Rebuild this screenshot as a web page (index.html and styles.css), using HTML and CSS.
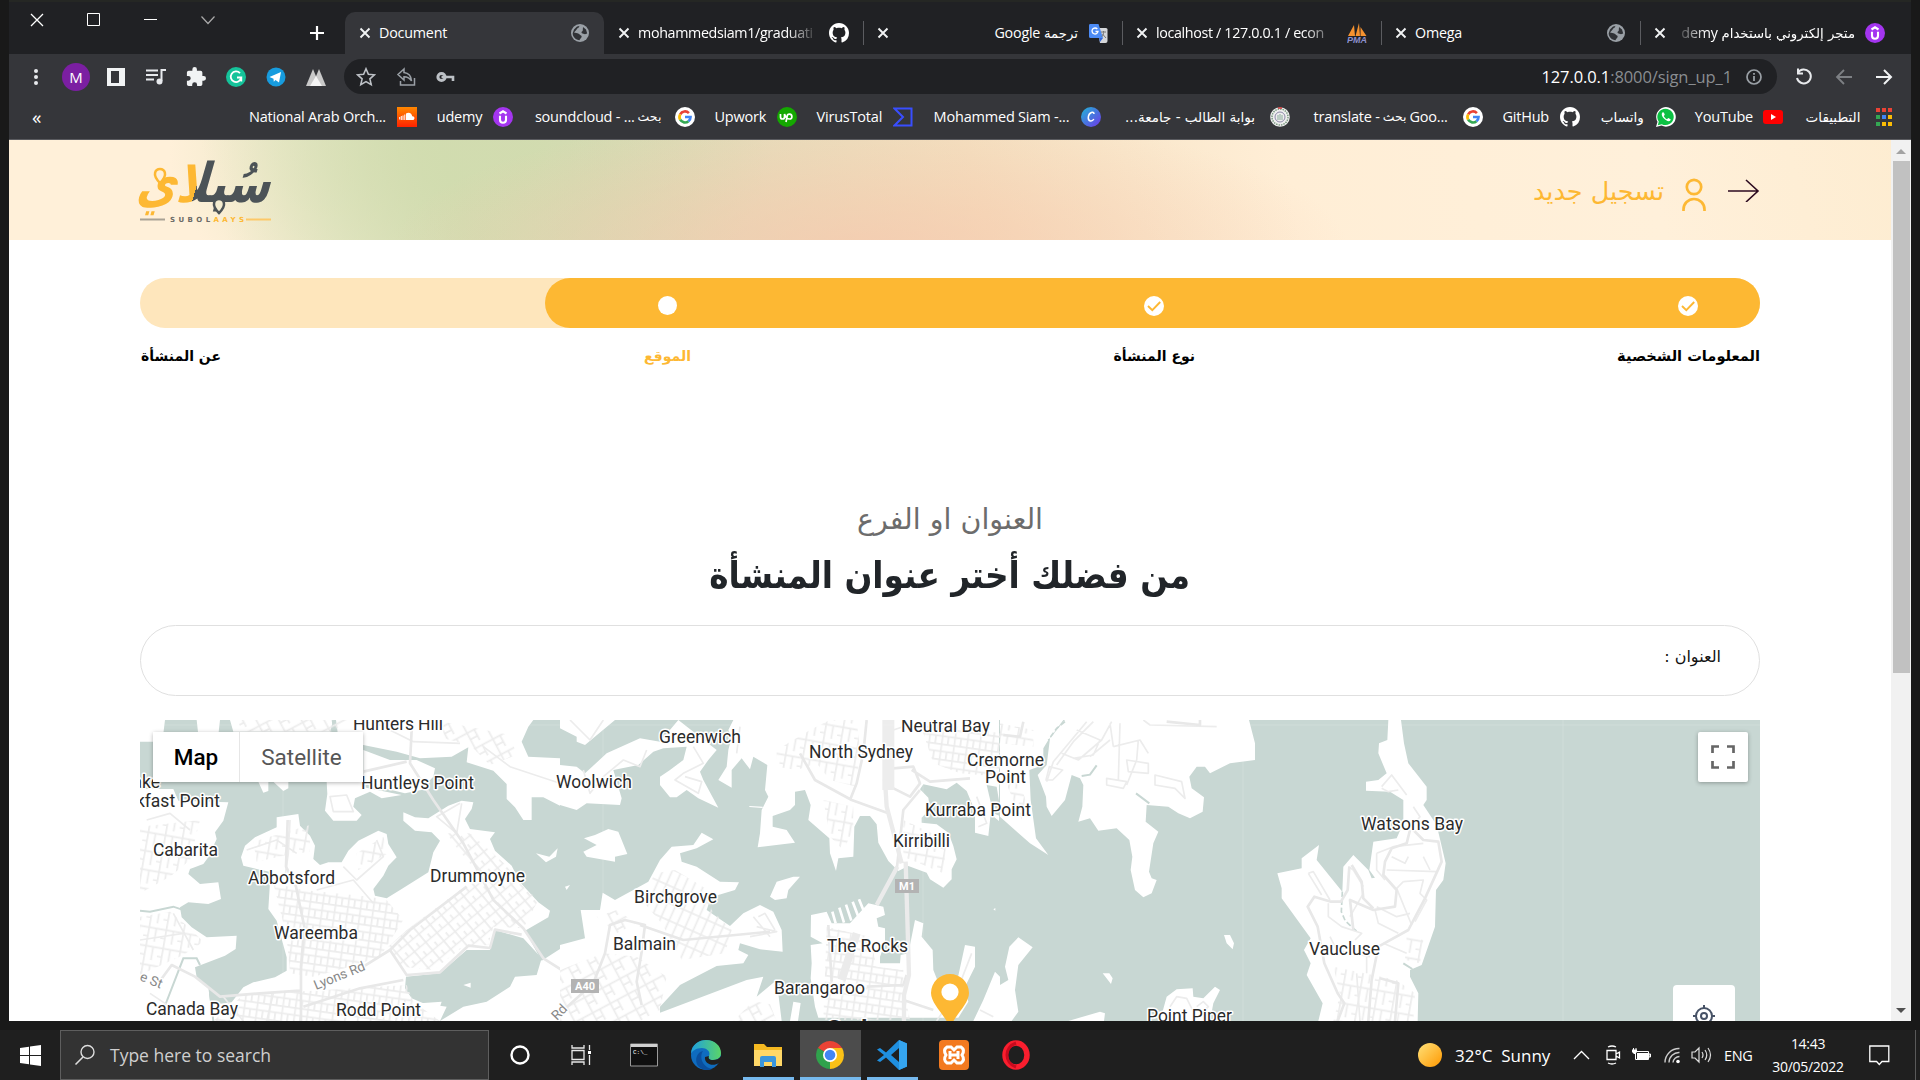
FILE: index.html
```html
<!DOCTYPE html>
<html lang="ar">
<head>
<meta charset="utf-8">
<title>Document</title>
<link rel="stylesheet" href="styles.css">
</head>
<body>
<svg class="defs" width="0" height="0">
  <symbol id="close" viewBox="0 0 12 12"><path d="M1.5 1.5l9 9M10.500 1.500l-9 9" stroke="#f1f3f4" stroke-width="1.9"/></symbol>
  <symbol id="globe" viewBox="0 0 18 18"><circle cx="9" cy="9" r="9" fill="#9aa0a6"/><path d="M9.500 1.800c-2 .2-1 1.800-2.500 2.300-1.500.4-1 1.900-2.200 2.400L3 8.500l3.500.8c2 .2 2 2 3.500 2.200 1.300.3.600 2.500-.9 3.500l-.6 1.200C5 16 1.700 13 1.700 9.200L3 5.500 6 2.500zM12 3l3 2.500 1.200 4-2.200.7-2.500-.7c-1.500-.4-1.200-2.300.2-2.600z" fill="#303236"/></symbol>
  <symbol id="github" viewBox="0 0 16 16"><path fill="#fff" d="M8 0C3.580 0 0 3.580 0 8c0 3.540 2.290 6.530 5.470 7.590.4.070.55-.17.55-.38 0-.19-.01-.82-.01-1.490-2.010.37-2.530-.49-2.690-.94-.09-.23-.48-.94-.82-1.130-.28-.15-.68-.52-.01-.53.63-.01 1.080.58 1.230.82.72 1.210 1.870.87 2.330.66.070-.52.28-.87.51-1.070-1.780-.2-3.640-.89-3.640-3.950 0-.87.31-1.590.82-2.150-.08-.2-.36-1.020.08-2.120 0 0 .67-.21 2.200.82.64-.18 1.320-.27 2-.27s1.360.09 2 .27c1.530-1.040 2.200-.82 2.200-.82.44 1.100.16 1.920.08 2.120.51.56.82 1.270.82 2.150 0 3.070-1.870 3.750-3.650 3.950.29.25.54.73.54 1.480 0 1.070-.01 1.930-.01 2.200 0 .21.15.46.55.38A8 8 0 0 0 16 8c0-4.420-3.580-8-8-8z"/></symbol>
  <symbol id="udemy" viewBox="0 0 20 20"><circle cx="10" cy="10" r="10" fill="#a435f0"/><path d="M6.500 6.500L10 4.300l3.500 2.200M7 8.800v4a3 3 0 0 0 6 0v-4" fill="none" stroke="#fff" stroke-width="2.100"/></symbol>
  <symbol id="google" viewBox="0 0 20 20"><circle cx="10" cy="10" r="10" fill="#fff"/><g fill="none" stroke-width="2.700"><path d="M13.900 6.100A5.500 5.500 0 0 0 5.200 7.300" stroke="#ea4335"/><path d="M5.200 7.300a5.500 5.500 0 0 0 0 5.400" stroke="#fbbc05"/><path d="M5.200 12.700a5.500 5.500 0 0 0 8.300 1.500" stroke="#34a853"/><path d="M13.500 14.200A5.500 5.500 0 0 0 15.500 10H10" stroke="#4285f4"/></g></symbol>
  <symbol id="check" viewBox="0 0 20 20"><circle cx="10" cy="10" r="10" fill="#fff"/><path d="M4 10l4.300 4.200L16.200 6" fill="none" stroke="#fdb833" stroke-width="1.900"/></symbol>
</svg>

<div class="desktop">
<div class="window">
  <div class="tabstrip">
    <div class="caption">
      <svg width="14" height="14"><path d="M1 1l12 12M13 1L1 13" stroke="#fff" stroke-width="1.300"/></svg>
      <svg width="14" height="14"><path d="M.5 .5h12v12h-12z" fill="none" stroke="#fff"/></svg>
      <svg width="14" height="14"><path d="M0 6.500h13" stroke="#fff"/></svg>
      <svg width="14" height="14"><path d="M.5 3.500l6.500 7 6.500-7" fill="none" stroke="#aaa" stroke-width="1.200"/></svg>
    </div>
    <svg class="newtab" width="16" height="16"><path d="M8 1v14M1 8h14" stroke="#fff" stroke-width="2.200"/></svg>
    <div class="tab active"><svg class="x"><use href="#close"/></svg><span class="ttl">Document</span><svg class="fav g"><use href="#globe"/></svg></div>
    <div class="tab nosep"><svg class="x"><use href="#close"/></svg><span class="ttl fade">mohammedsiam1/graduati</span><svg class="fav"><use href="#github"/></svg></div>
    <div class="tab"><svg class="x"><use href="#close"/></svg><span class="ttl end" dir="rtl"><i class="ar">ترجمة</i> Google</span>
      <svg class="fav" viewBox="0 0 20 20"><path d="M9 5h9a1.500 1.500 0 0 1 1.500 1.500V18a2 2 0 0 1-2 2H12z" fill="#d5d7da"/><path d="M2 1h8.500L15 15H2.500A1.500 1.500 0 0 1 1 13.500v-11A1.500 1.500 0 0 1 2 1z" fill="#4c8bf5"/><path d="M11 15h4l-3 4z" fill="#3367d6"/><path d="M9.300 6A3 3 0 1 0 10 8.500H7.500" fill="none" stroke="#fff" stroke-width="1.300"/><path d="M13 9h5M15.500 8v1.500c0 2-1 3.500-2 4.500M14.500 11l3.500 4" stroke="#777" fill="none"/></svg></div>
    <div class="tab"><svg class="x"><use href="#close"/></svg><span class="ttl fade">localhost / 127.0.0.1 / econ</span>
      <svg class="fav" viewBox="0 0 20 20"><path d="M1 13L7 2l1 11zM8.500 13L12 0l1 13zM13.500 13V4l6 9z" fill="#f5922f"/><text x="0" y="20" font-size="8.500" font-weight="700" font-style="italic" fill="#8c90cc" textLength="20" lengthAdjust="spacingAndGlyphs" font-family="Liberation Sans">PMA</text></svg></div>
    <div class="tab"><svg class="x"><use href="#close"/></svg><span class="ttl">Omega</span><svg class="fav g"><use href="#globe"/></svg></div>
    <div class="tab"><svg class="x"><use href="#close"/></svg><span class="ttl end fadel" dir="rtl"><i class="ar">متجر إلكتروني باستخدام</i> <bdi>demy</bdi></span><svg class="fav"><use href="#udemy"/></svg></div>
  </div>

  <div class="toolbar">
    <div class="cell"><svg width="6" height="20"><g fill="#e8eaed"><circle cx="3" cy="4" r="2"/><circle cx="3" cy="10" r="2"/><circle cx="3" cy="16" r="2"/></g></svg></div>
    <div class="cell"><span class="avatar">M</span></div>
    <div class="cell"><svg width="20" height="20"><path d="M1 1h18v18H1zM5 4v12h8V4z" fill="#f1f3f4" fill-rule="evenodd"/></svg></div>
    <div class="cell"><svg width="20" height="20"><path d="M0 3.500h12M0 8h12M0 12.500h8M15.500 14V3H20" fill="none" stroke="#e8eaed" stroke-width="2"/><circle cx="13.500" cy="14.500" r="3" fill="#e8eaed"/></svg></div>
    <div class="cell"><svg width="20" height="20" viewBox="1 1 22 22"><path fill="#f1f3f4" d="M20.500 11H19V7a2 2 0 0 0-2-2h-4V3.500a2.500 2.500 0 0 0-5 0V5H4a2 2 0 0 0-2 2v3.800h1.500a2.700 2.700 0 0 1 0 5.400H2V20a2 2 0 0 0 2 2h3.800v-1.500a2.700 2.700 0 0 1 5.400 0V22H17a2 2 0 0 0 2-2v-4h1.500a2.500 2.500 0 0 0 0-5z"/></svg></div>
    <div class="cell"><svg width="20" height="20"><circle cx="10" cy="10" r="10" fill="#15c39a"/><path d="M14 6.200A5.300 5.300 0 1 0 15.300 10.500H11M15.300 10.500v4" fill="none" stroke="#fff" stroke-width="1.800"/></svg></div>
    <div class="cell"><svg width="20" height="20"><circle cx="10" cy="10" r="9.500" fill="#179cde"/><path d="M3.500 10L15 5l-2 10.500-3.500-2.500-1.700 1.800-.3-3z" fill="#fff"/></svg></div>
    <div class="cell"><svg width="22" height="18"><path d="M1 18L8 1l7 17z" fill="#c9c9c9"/><path d="M7 18l7-17 7 17z" fill="#c9c9c9"/><path d="M5 18l6-10 6 10z" fill="#f4f4f4"/></svg></div>
    <div class="omnibox">
      <div class="cell"><svg width="20" height="20"><path d="M10 1.800l2.400 5.500 6 .5-4.500 4 1.300 5.900L10 14.600l-5.200 3.100 1.300-5.900-4.500-4 6-.5z" fill="none" stroke="#bdc1c6" stroke-width="1.600"/></svg></div>
      <div class="cell"><svg width="20" height="20"><path d="M8 2L2 7.500 8 13V9.800c4 0 6 1.500 7.500 4.200-.3-5-3-8-7.500-8.500zM18.500 11v7h-14v-4" fill="none" stroke="#9aa0a6" stroke-width="1.500"/></svg></div>
      <div class="cell"><svg width="20" height="12"><path d="M5.500 6H17v4" stroke="#bdc1c6" stroke-width="2.600" fill="none"/><circle cx="5.500" cy="6" r="3.600" fill="none" stroke="#bdc1c6" stroke-width="3"/></svg></div>
      <span class="url"><b>127.0.0.1</b>:8000/sign_up_1</span>
      <svg class="info" width="16" height="16"><circle cx="8" cy="8" r="7" fill="none" stroke="#9aa0a6" stroke-width="1.700"/><path d="M8 7v5M8 4v1.800" stroke="#9aa0a6" stroke-width="1.800"/></svg>
    </div>
    <div class="cell"><svg width="18" height="18"><path d="M3 4.500A7 7 0 1 1 2 10M3 .5V5.500h5" fill="none" stroke="#e8eaed" stroke-width="2"/></svg></div>
    <div class="cell"><svg width="18" height="18"><path d="M17 9H2M9 2L2 9l7 7" fill="none" stroke="#7d8084" stroke-width="1.800"/></svg></div>
    <div class="cell"><svg width="18" height="18"><path d="M1 9h15M9 2l7 7-7 7" fill="none" stroke="#f1f3f4" stroke-width="2"/></svg></div>
  </div>

  <div class="bookmarks">
    <span class="more">«</span>
    <div class="bm"><span class="w138">National Arab Orch...</span><svg viewBox="0 0 20 20"><defs><linearGradient id="sc" x2="0" y2="1"><stop stop-color="#f80"/><stop offset="1" stop-color="#f20"/></linearGradient></defs><path d="M0 0h20v20H0z" fill="url(#sc)"/><path d="M9 6.500c3-2 6 0 6.200 2.700 3-.2 3 3.800.3 3.800H9zM7.300 7.500h1V13h-1zM5.500 8.500h1V13h-1zM3.800 9h1v4h-1zM2.200 10h1v2.500h-1z" fill="#fff"/></svg></div>
    <div class="bm"><span class="w46">udemy</span><svg><use href="#udemy"/></svg></div>
    <div class="bm"><span class="w131">soundcloud - ...<i class="ar">بحث</i></span><svg><use href="#google"/></svg></div>
    <div class="bm"><span class="w53">Upwork</span><svg viewBox="0 0 20 20"><circle cx="10" cy="10" r="10" fill="#14a800"/><path d="M3.500 7v3a2 2 0 0 0 4 0V7c1 3 3 5 5 5a2.400 2.400 0 1 0-2.400-2.600L9 15" fill="none" stroke="#fff" stroke-width="1.700"/></svg></div>
    <div class="bm"><span class="w66">VirusTotal</span><svg viewBox="0 0 20 20"><path d="M1.500 1.500h17v17h-17L10 10z" fill="none" stroke="#394eff" stroke-width="2"/></svg></div>
    <div class="bm"><span class="w138">Mohammed Siam -...</span><svg viewBox="0 0 20 20"><defs><linearGradient id="cv" x1="0" y1="0" x2="1" y2="1"><stop stop-color="#1fb6d6"/><stop offset="1" stop-color="#7036e8"/></linearGradient></defs><circle cx="10" cy="10" r="10" fill="url(#cv)"/><path d="M13 7c0-3-5-2-5.700 3-.5 5 4 5 5.500 2" fill="none" stroke="#fff" stroke-width="1.500"/></svg></div>
    <div class="bm"><span class="w138 ar wide" dir="rtl">بوابة الطالب - جامعة...</span><svg viewBox="0 0 20 20"><circle cx="10" cy="10" r="9.800" fill="#eee"/><circle cx="10" cy="10" r="8" fill="none" stroke="#7a9a80" stroke-width="1.500" stroke-dasharray="1.500 1"/><circle cx="10" cy="10" r="5" fill="none" stroke="#8c88a8"/><path d="M8 8v5M10 7v6M12 8v5" stroke="#8a9"/><path d="M8 1h4" stroke="#c33" stroke-width="1.500"/></svg></div>
    <div class="bm"><span class="w142">translate - <i class="ar">بحث</i> Goo...</span><svg><use href="#google"/></svg></div>
    <div class="bm"><span class="w48">GitHub</span><svg><use href="#github"/></svg></div>
    <div class="bm"><span class="w46 ar wide">واتساب</span><svg viewBox="0 0 20 20"><path d="M0 20l1.500-5.200A9.800 9.800 0 1 1 5.500 18.600z" fill="#fff"/><path d="M1.800 18.200l1-3.600a8.200 8.200 0 1 1 3 2.600z" fill="#0cc143"/><path d="M6.800 5.200c-2 1.500-.8 4.300 1.200 6.400s5 3.700 6.500 1.600c.5-.9.300-1.200-2.300-2.200l-1.200 1.200C9.500 11.600 8.300 10.300 7.800 9l1-1.200c-.6-1.800-.8-2.800-2-2.600z" fill="#fff"/></svg></div>
    <div class="bm"><span class="w58">YouTube</span><svg viewBox="0 0 20 20"><rect y="3" width="20" height="14" rx="3" fill="#f00"/><path d="M8 7l5 3-5 3z" fill="#fff"/></svg></div>
    <div class="bm"><span class="w61 ar wide">التطبيقات</span><svg viewBox="0 0 20 20"><path d="M2 1h4v4H2zM8 1h4v4H8zM14 1h4v4h-4z" fill="#ea4335"/><path d="M2 8h4v4H2zM2 15h4v4H2z" fill="#34a853"/><path d="M8 8h4v4H8z" fill="#4285f4"/><path d="M14 8h4v4h-4zM8 15h4v4H8zM14 15h4v4h-4z" fill="#fbbc05"/></svg></div>
  </div>

  <div class="viewport">
    <main class="page">
      <header class="site-head">
        <svg class="logo" width="131" height="64" viewBox="0 0 131 64">
          <defs><linearGradient id="split" gradientUnits="userSpaceOnUse" x1="-130" y1="0" x2="0" y2="0"><stop offset=".43" stop-color="#fdb833"/><stop offset=".43" stop-color="#4c5357"/></linearGradient></defs>
          <g transform="translate(129 44) skewX(-16) scale(1.040 1.300)"><text class="logo-text" direction="rtl" x="0" y="0" font-size="42" fill="url(#split)">سُبلاي</text></g>
          <path d="M20 25c-9-9-4-14 0-14s9 5 0 14z" fill="#fff0d9" stroke="#fdb833" stroke-width="2.500"/>
          <path d="M79 55c-9-9-4-14 0-14s9 5 0 14z" fill="#f4ecd0" stroke="#4c5357" stroke-width="2.500"/>
          <path d="M0 61.500h25" stroke="#a9a294" stroke-width="2"/><path d="M106 61.500h25" stroke="#fdc868" stroke-width="2"/>
          <text x="30" y="64" class="logo-sub" textLength="74">SUBOL<tspan fill="#fdb833">AAYS</tspan></text>
        </svg>
        <div class="head-title">
          <h1>تسجيل جديد</h1>
          <svg width="24" height="33"><g fill="none" stroke="#fdb833" stroke-width="2.700"><circle cx="12" cy="9" r="7.200"/><path d="M1.500 33v-1.500a10.500 10.500 0 0 1 21 0V33"/></g></svg>
          <svg width="32" height="24"><path d="M0 13h30M18 2l12 11-12 11" fill="none" stroke="#2c0a20" stroke-width="1.600"/></svg>
        </div>
      </header>

      <div class="content">
        <div class="progress"><div class="bar" style="width:75%"><i class="dot"></i><svg class="ok second"><use href="#check"/></svg><svg class="ok"><use href="#check"/></svg></div></div>
        <div class="steps" dir="rtl"><span class="s1">المعلومات الشخصية</span><span class="s2">نوع المنشأة</span><span class="s3 on">الموقع</span><span class="s4">عن المنشأة</span></div>
        <p class="sub"><span>العنوان او الفرع</span></p>
        <h2><span>من فضلك أختر عنوان المنشأة</span></h2>
        <div class="address" dir="rtl"><label>العنوان :</label></div>

        <div class="map">
          <svg class="canvas" width="1620" height="301" viewBox="140 720 1620 301">
            <defs>
              <pattern id="gridA" width="44" height="32" patternUnits="userSpaceOnUse" patternTransform="rotate(-40)"><path d="M0 16h44M12 0v32M33 0v16" class="r"/></pattern>
              <pattern id="gridB" width="38" height="46" patternUnits="userSpaceOnUse" patternTransform="rotate(8)"><path d="M0 10h38M0 34h38M8 0v46M26 10v24" class="r"/></pattern>
              <pattern id="gridC" width="26" height="48" patternUnits="userSpaceOnUse" patternTransform="rotate(24)"><path d="M0 12h26M10 0v48" class="r"/></pattern>
              <pattern id="gridD" width="60" height="52" patternUnits="userSpaceOnUse" patternTransform="rotate(-28)"><path d="M0 16h60M20 0v52M44 16v36M20 38h24" class="r"/></pattern>
              <pattern id="gridE" width="52" height="56" patternUnits="userSpaceOnUse" patternTransform="rotate(10)"><path d="M0 16h52M14 0v56M36 16v40M0 42h14" class="r"/></pattern>
              <clipPath id="c7"><path d="M30 30h1260v903H30z"/></clipPath><clipPath id="c8"><path d="M0 30h1321v903H0z"/></clipPath>
            </defs>
            <path d="M140 720h1620v301H140z" fill="#c8d7d3"/>

            <g transform="translate(130 710) scale(.33333)" clip-path="url(#c7)">
              <path class="land" d="M30 30h1262v903H30z"/>
              <path class="water" d="M105 30h95l5 45h60l5-45h30l10 35h290l10 -35h8l8 60 74 15 100 20 70 20 95-5 50-28-5 45 80 25 40 40v45l25 25 25 38h25v-68h35l50 25v430l-55 35-50-90 70-40 5-20-35-25-55-60-25-50-50-45-15-35 15-20-75-10-15-30 20-30 5-20-35-5-40 15-60 38-40-3-35-15v25l35 30 50 5 25 25-20 35-15 60-80 50-45 28-35-8-5-20 30-40 15-30 25-25-25-40-5-30-25-10-60 30-30 30-20 35h-40l-25 8-20-18 5-40-15-30-30-30-5-35-65 10v30l-65 30-30 25-12 35 7 25 40 10 45 10-5 30-5 80 25 35 15 55 15 55v40l-35 20-65 15-30 15-35 45-40 5-25-10-5-40-35-30-5-30 90-35 32-20 3-40-90 5-45-30-30-30-5-30 25-15 60 5 38-15-8-50-55 5-35-30 5-15 40-15 15-20 25-55-5-20 25-35 15-55-150-5-15-35H30v-80l15-10 50-35z"/>
              <path class="land" d="M385 215h30v28l-15 5zM430 215h45v20l-15 8zM590 215h110l-5 15 120 25-60 10-35-20-45 20-5 25 25 25-15 17h-70l-25-30 7-50zM700 120l80 30h80l55 25-5 25-25 25 15 10-75 15-125-30zM1218 430l40 10 25-25-5 25-30 17zM1305 530l15-8-10 18z"/>
              <path class="water" d="M1210 30h80v115l-95-5-20-45 20-45zM828 800l102-10 80-70h70l15-60 85 25 55 60-15 50-65 5-15 30-70 45-70 15-70 43 20-43-70-10-35-15-20-30zM30 175h40v-80H30z"/>
              <path class="land" d="M1000 825l22-7v15zM870 880l65-5-5 15-50 5z"/>
              <path class="creek" d="M30 602l30 3 70-15 35 12M100 900l60-155h40l10 20M240 850l10 83M608 30l5 35"/>
              <path fill="url(#gridA)" d="M830 660l180-135 130-30 85 75-45 85-90-5-15 55-75 5-90 70-95-10-40-60z"/>
              <path fill="url(#gridA)" d="M950 370h70l125 110-90 20-70-80z"/>
              <path fill="url(#gridB)" d="M430 520l90 20 200 20 50 10 50 60-70 110-90 30-110 30-70-10-10-110z"/>
              <path fill="url(#gridB)" d="M340 855l160-10 330-20 20 50 80 58H250z"/>
              <path fill="url(#gridE)" d="M30 620l90-15 60 50 40 40-60 40-130 60zM30 350l180-20-30 120-60 50-90 50zM370 395l170-50v80l-70 10-90 20zM680 430l80-50 15 50-90 50z"/>
              <path fill="url(#gridD)" d="M320 30h330l-40 35H340zM940 35l200 40 20 60-80 30-60-60-80-20z"/>
              <path class="r" d="M600 260l10 45h60l-20-50zM730 35l120 60 140 5M1060 110l80 60 150 50M480 330l-5 100-10 70M560 540l110-30 60 70M50 330l70-20 60 50M350 420l90-30 60 40M640 470l40 40 80-70-20-50M130 610l60 110M30 690l130-20M60 850l90 60M280 860l60 73M430 850l-20 83M990 280l-70 40 60 50 15-90"/>
              <path class="m" d="M473 330l-5 140 30 60 25 120-10 120v163M845 60l-5 100 70 110 90 130 90 170 90 85 60 90 110 70M700 770l80-50 60-60 170-130M780 720l50 75 100-8 85-80 65 7 15-55 80 15M85 820l40-55 70 35 75 60 120-10 120-8M520 890l170-55 130-25M700 185l130-30"/>
            </g>

            <g transform="translate(560 710) scale(.33333)" clip-path="url(#c8)">
              <path class="land" d="M0 30h165L75 105 50 95V80L0 55zM355 30h165l-15 30 10 20-10 40-5 50-25 40 40 23v-53l30-35 25 33 10-38 42 25-7 75 10 20-20 40-5 70-7 42 112-14-25-38-42-10v-32l52-18 15-15v-40l30-5 17 45-7 45 63 55 2 45 18 53 7-38 45-5 3-90 17-32h30l20 25 5 55 30 55 30 30 30-15 55 20 10 20 40 25 25-25v-30l15-30-10-40-15-40-35-25-45-5v-15l25-25-5-35-25-25 10-15 70 15 30-20 30 25 25 60v65l40 10 7-65 25 20V30H515zM355 30l115 90-25 30-25 35 10 25 45 83-60-28-35-25-30 22h-20l-30-37v-25l30-20 40-30 10-40-70 5-30 10-45 40-75 15 25 85-5 20-100-5-30 20-50-15V165l50 5 25 20 65-60 100-45 60 10z"/>
              <path class="water" d="M1280 225l30 5 15 90-25-10z"/>
              <path class="land" d="M72 385l33-10 40-18 30 8 27 67-37 8v15l-85-15-10-15 40-20zM630 560l20-45 50-15h20l-35 40-5 25-35 5zM15 530l15-5-10 15zM568 288l40 2v4l-40-3zM1300 598l6-4v8z"/>
              <path class="land" d="M0 705l75-20-13-85h58l8-52 37 22 100-55 35-65 35-40 65-5 25-37 35 20-50 27-50 15 5 25 45 15 70 45 57 2-12 23-50 15-25 15-10 30 70 48 40-38 50-25 40 20 25 55 3 65-68-7-60-18-5 20 30 15-15 25-80 8-110 57-60 65v18l260-98 50-10-20 60 60-50 15 123H0zM690 933l10-58 22 4-8 54zM753 615l47-10 15 35h55l55-60 45 10 5 25-25 10 5 25 20 5v45l-15 40v20h60l2-25 23-5 10-50 10-50 25 10-5 40 33 40 2 60 20 50 50-10 25-115 30 5v60l-30 60 10 45-30 48H775l-10-33-13-85 3-45-3-55 36-5-36-20zM1240 933l30-63 35-85 15 15v133zM1270 880l50-60v113h-70z"/>
              <path d="M817 605l10 35M838 593l14 45M858 584l16 48M878 575l16 42M897 568l14 34" stroke="#fff" stroke-width="8"/>
              <path fill="url(#gridC)" d="M285 490l60-10 100 60 10 60 60 60-20 70-130 20-60-110-60-70z"/>
              <path fill="url(#gridD)" d="M0 780l130-50 100 10 90 60-20 100-60 33H0zM110 620l60-20 60 40-60 30zM520 933l60-60 50 10 20 50z"/>
              <path fill="url(#gridB)" d="M800 650l80 20 50 10 20 90 80 10v50l20 100H790zM1080 40l120 10 120 20v130l-120-10-80-30z"/>
              <path fill="url(#gridE)" d="M650 120l100-60 60-30h80l10 90-10 110-80-20-40-50-60 20-60-10zM790 270l90 20v70l-30 60-40-40zM1030 330l130 60-10 100-120-50z"/>
              <path class="r" d="M30 30l60 60 40-60M70 180l20 70 40-50 60-50 50 20 20-50M400 110l30 50-60 30-25 20 70 40 10-35-50-15M540 50l-10 80M580 620l50 60M590 650l60 15-80 15M595 620l20-10 30 50M1200 820l35-90M1130 933l40-60M1260 900l40 20M1255 350l25-10-30-80M1000 60l60-20"/>
              <path class="m" d="M0 910l100-90 35-90 15-85 45-15 60 15-10 80-15 90 15 70M240 645l130 45 260-25M720 130l45 80 110 60 110 40M920 30l-10 100-20 90-20 50M990 230l60 30 30-40-20-50-60 5M1055 180l55 35 120-10M1010 480l20-180 50-60M920 830l110-5 10-30M1030 870l90 30M805 645l10 170"/>
              <path d="M995 30l-15 60-5 120 5 80 45 170M1012 470l-62 115M1037 455l10 340-15 60v78" class="big"/>
              <path d="M985 30v210" stroke="#ededed" stroke-width="36"/>
              <path d="M890 670l-45 140" stroke="#ebebeb" stroke-width="24"/>
            </g>

            <g transform="translate(1000 710) scale(.33333)">
              <path class="land" d="M0 30h190l-45 60-15 25v50l-42 15 4 90 16 115 37 50-55-35L0 320zM195 30h552l18 70v50l-75 10-60 30-15-20h-25l-22 30 7 35 37 27-4 43-38 20-35-15-30-20-65-5-3 50 38 30-15 35-13 85 8 20 15 5-15 40-25 12-25-22-13-60 5-40-9-50-38-35-55 7-25-37-35 10 12-45 3-65-10-20-25-10-20 75-40 48-15-28-2-30-25-65 27-30 10-80z"/>
              <path class="land" d="M0 825l25-15-10-40 13-60 27-28 43 30-43 53-10 75 10 65-20 28H0zM1165 30h38l9 70 13 60 55 70v40l-10 15 40 60 27 115-7 50-22 30-3 110-40 115-35 15v20l25 50-2 83H955l13-53-48-85 12-35-20-40 20-35-87-120v-30l-13-45 73-15v-30l52-40-7 45 77 95 3-75 30-35 45 45 10 25 10-2-17-23 12-85 70-10 20-45v-70l-40-25-72-3v-27l37-5 25-20-25-60 2-30 25-10zM480 933l20-73 30-22 48-3 2 25 30 5 35-35 15 10-20 40-10 53zM205 933l95-28 15 5-3 23zM672 675h18l12 25-4 18-18-18zM308 790h20l10 15-5 17z"/>
              <path class="creek" d="M408 250l40 30M245 198l25-4 20-28M1210 760l27 17"/>
              <path d="M195 35l-25 20-25 35M1027 545l-3 60 12 28 35 32" fill="none" stroke="#c8d7d3" stroke-width="5" stroke-dasharray="16 8"/>
              <path class="r" d="M140 215l20-60 50-60 50-60M170 165l50-70 60-60M185 130l50 20 70-60 30-55M230 60l70 30-20 45-60 10M270 140l60-50M330 40l10 70M360 40l-5 170M340 110l80-20 25 40M415 90l-5 60-30 75"/>
              <path fill="url(#gridE)" d="M0 40l100 20v50L0 100zM1000 770l190 40 55 40-5 83h-240l20-80zM1220 680l50 10-10 70-45-10zM10 200l50 20 30 90-20 30z"/>
              <path class="r" d="M138 210l10-40 40 10-30 30zM320 205l60 10-10 20-50-10zM380 150l65 10v30l-60-5zM465 195l80 20 10 50-30-30-60-10zM430 30l20 15 200 5M510 890l20-30 30 5 20 40M590 890l20-15 15 15-20 20M1145 230l30-35 45 60M1145 235l20 10 30-5M1240 290l20 30-25 30M925 490l15-5 50 85M925 490l40 65M1045 470l15 10 30 50M1130 430l50-20 90-10M1130 430v50l25 30M1175 440l40 20 10-20M1160 480l150 5M1270 440l20 40M1210 515l60-5-10 40 20 20-35 65M1210 515l-20 20 45 110M1050 620l40-70M985 580v40l40 30 60 20-20 20M990 680l20 40 100 20M1125 600l10 40 60 30M1130 590l60 30 40-10M1070 790l10 143M1100 740v50M1150 700l70 30"/>
              <path class="m" d="M1230 360l-10 40-45 15-20 40-5 40 40 45-5 50-65 10-70-30 10 90M1240 360l30 30 45 5 10 60-50 110-50 95-90 50-20 100-10 123M1048 470l-5 70-20 35h-30l-50-15-20 30 30 60 20 110 40 90 20 30-20 53M1055 465l30 50 5 50 30 30M1140 805l55 15-10 113M10 75l50 5 10-45M500 35l100 10v-15"/>
            </g>
            <path d="M603 720v301M923 720v301M1243 720v301M1563 720v301M283 720v301M140 725h1620" stroke="#fff" stroke-opacity=".15"/>

            <g class="labels">
              <text x="353" y="730" textLength="90">Hunters Hill</text>
              <text x="160" y="787.500" text-anchor="end">ake</text>
              <text x="220" y="807" text-anchor="end">kfast Point</text>
              <text x="361" y="789" textLength="113">Huntleys Point</text>
              <text x="153" y="855.500" textLength="65">Cabarita</text>
              <text x="248" y="884" textLength="87">Abbotsford</text>
              <text x="430" y="882" textLength="95">Drummoyne</text>
              <text x="274" y="939" textLength="84">Wareemba</text>
              <text x="146" y="1015" textLength="92">Canada Bay</text>
              <text x="336" y="1016" textLength="85">Rodd Point</text>
              <text x="556" y="788" textLength="76">Woolwich</text>
              <text x="659" y="743" textLength="82">Greenwich</text>
              <text x="809" y="758" textLength="104">North Sydney</text>
              <text x="901" y="732" textLength="89">Neutral Bay</text>
              <text x="967" y="766" textLength="77">Cremorne</text>
              <text x="985" y="783" textLength="41">Point</text>
              <text x="925" y="816" textLength="106">Kurraba Point</text>
              <text x="893" y="847" textLength="57">Kirribilli</text>
              <text x="634" y="903" textLength="83">Birchgrove</text>
              <text x="613" y="950" textLength="63">Balmain</text>
              <text x="827" y="952" textLength="81">The Rocks</text>
              <text x="774" y="994" textLength="91">Barangaroo</text>
              <text x="1361" y="829.500" textLength="102">Watsons Bay</text>
              <text x="1309" y="955" textLength="71">Vaucluse</text>
              <text x="1147" y="1022" textLength="85">Point Piper</text>
              <text class="city" x="827" y="1037">Sydney</text>
              <g class="road"><text transform="translate(316 990) rotate(-22)">Lyons Rd</text><text transform="translate(139 980) rotate(22)">e St</text><text transform="translate(557 1021) rotate(-46)">Rd</text></g>
            </g>
            <g class="shield"><path d="M895 879h24v14h-24zM571 979h28v14h-28z" fill="#b3b3b3"/><text x="907" y="890">M1</text><text x="585" y="990">A40</text></g>
            <path d="M950 1028c-4-12-19-24-19-35a19 19 0 0 1 38 0c0 11-15 23-19 35z" fill="#fdb833"/>
            <circle cx="950" cy="992" r="8.600" fill="#fff"/>
          </svg>
          <div class="map-type"><button class="sel">Map</button><button>Satellite</button></div>
          <button class="full"><svg width="24" height="24"><path d="M1.500 8V1.500H8M16 1.500h6.500V8M22.500 16v6.500H16M8 22.500H1.500V16" fill="none" stroke="#666" stroke-width="2.700"/></svg></button>
          <button class="locate"><svg width="22" height="22"><g fill="none" stroke="#475266" stroke-width="2"><circle cx="11" cy="11" r="8"/><circle cx="11" cy="11" r="3"/><path d="M11 0v4M11 18v4M0 11h4M18 11h4"/></g></svg></button>
        </div>
      </div>
    </main>
    <div class="scroll"><svg width="10" height="5"><path d="M0 5l5-5 5 5z" fill="#a3a3a3"/></svg><i></i><svg class="down" width="10" height="5"><path d="M0 0l5 5 5-5z" fill="#505050"/></svg></div>
  </div>
</div>

<div class="taskbar" dir="ltr">
  <div class="start"><svg width="21" height="21"><path d="M0 3l9-1.200V10H0zM10 1.600L21 0v10H10zM0 11h9v8.200L0 18zM10 11h11v10l-11-1.600z" fill="#fff"/></svg></div>
  <div class="search"><svg width="22" height="22"><circle cx="13.500" cy="8" r="6.500" fill="none" stroke="#ddd" stroke-width="1.400"/><path d="M9 13L1.500 20.500" stroke="#ddd" stroke-width="1.600"/></svg><span>Type here to search</span></div>
  <div class="app"><svg width="22" height="22"><circle cx="11" cy="11" r="8.500" fill="none" stroke="#fff" stroke-width="2.400"/></svg></div>
  <div class="app"><svg width="22" height="20"><path d="M1 0v3h12V0M1 20v-3h12v3M1 5.500h12v9H1zM18.500 0v5M18.500 10v10" fill="none" stroke="#e8e8e8" stroke-width="1.300"/><path d="M17 6h3v3h-3z" fill="#fff"/></svg></div>
  <div class="app"><svg width="28" height="24"><path d="M.5 1h27v22H.5z" fill="#101010" stroke="#9a9a9a"/><path d="M1 1h26v3H1z" fill="#d0d0d0"/><text x="3" y="11" font-size="6" fill="#fff" font-family="Liberation Mono">C:\_</text></svg></div>
  <div class="app"><svg width="32" height="30" viewBox="0 0 32 30"><defs><linearGradient id="eg" x1="0" y1="0" x2="1" y2="0"><stop stop-color="#1e9fe0"/><stop offset="1" stop-color="#5bd567"/></linearGradient></defs><circle cx="16" cy="15" r="15" fill="#0f6cbf"/><path d="M1 14C1 4 10 0 16 0c9 0 15 6 15 13 0 6-5 7-8 7-4 0-5-2-4-4 2-5-3-8-7-8C6 8 2 11 1 14z" fill="url(#eg)"/><path d="M19 16c-1 2 0 4 4 4 3 0 6-1 8-4v5l-2 2c-6 4-15 1-14-6z" fill="#202020"/><path d="M13 11c-4 6-1 16 9 18-4 2-10 1-14-3C4 20 7 12 13 11z" fill="#0a4f9e"/></svg></div>
  <div class="app open"><svg width="28" height="24"><path d="M0 1h10l3 3h15v18H0z" fill="#f5b921"/><path d="M0 7h28v16H0z" fill="#ffd868"/><path d="M6 24v-9a2 2 0 0 1 2-2h12a2 2 0 0 1 2 2v9h-4v-5h-8v5z" fill="#3a96dd"/></svg></div>
  <div class="app open current"><svg width="28" height="28" viewBox="0 0 28 28"><path d="M14 14L1.900 7A14 14 0 0 1 26.100 7z" fill="#ea4335"/><path d="M14 14L26.100 7A14 14 0 0 1 14 28z" fill="#fbc116"/><path d="M14 14v14A14 14 0 0 1 1.900 7z" fill="#30a24c"/><path d="M14 7h12.100L20 17z" fill="#fbc116"/><circle cx="14" cy="14" r="7" fill="#fff"/><circle cx="14" cy="14" r="5.300" fill="#4285f4"/></svg></div>
  <div class="app open"><svg width="30" height="30"><path d="M22 0l8 3.500v23L22 30 9 17.500 3 22l-3-1.500L7 15 0 9.500 3 8l6 4.500zM22 8l-8 7 8 7z" fill="#1f8fe0" fill-rule="evenodd"/><path d="M22 0l8 3.500v23L22 30z" fill="#35a5f0"/></svg></div>
  <div class="app"><svg width="30" height="30"><rect width="30" height="30" rx="4" fill="#f37a20"/><path d="M8 7h4l3 3 3-3h4c3 2 3 5 1 8 2 3 2 6-1 8h-4l-3-3-3 3H8c-3-2-3-5-1-8-2-3-2-6 1-8zM11 11v8M19 11v8M11 15h8" fill="none" stroke="#fff" stroke-width="3"/></svg></div>
  <div class="app"><svg width="30" height="30"><ellipse cx="15" cy="15" rx="11" ry="12" fill="none" stroke="#fa1e2e" stroke-width="5.500"/><path d="M15 3c-12 4-12 20 0 24" stroke="#c80a1e" stroke-width="3" fill="none"/></svg></div>
  <div class="tray">
    <i class="sun"></i><span class="temp">32°C&nbsp; Sunny</span>
    <svg class="chev" width="17" height="10"><path d="M1 9l7.500-7.500L16 9" fill="none" stroke="#fff" stroke-width="1.300"/></svg>
    <svg width="16" height="20"><path d="M2 5.500h9v9H2zM11 9l3.500-2v6L11 11M3 2q4-2 8 0M3 18q4 2 8 0" fill="none" stroke="#fff" stroke-width="1.300"/></svg>
    <svg class="bat" width="20" height="16"><path d="M4.500 4.500h13v8h-13zM18 7v3h1.500V7zM2.500 1v2M5 1v2" fill="none" stroke="#fff"/><path d="M6 6h11v6H6zM1 2.500h5V5L4 7H3L1 5z" fill="#fff"/></svg>
    <svg class="wifi" width="17" height="17"><path d="M1 15.500A14 14 0 0 1 15.500 1.500M5 15.500A10 10 0 0 1 15.500 5.500M9 15.500A6.500 6.500 0 0 1 15.500 9.500" fill="none" stroke="#ccc" stroke-width="1.400"/><circle cx="14" cy="14.500" r="1.800" fill="#fff"/></svg>
    <svg class="spk" width="21" height="18"><path d="M1 6h3l4-4v14l-4-4H1zM11 6q2 3 0 6M14 4q3.500 5 0 10M17 2q5 7 0 14" fill="none" stroke="#ddd" stroke-width="1.200"/></svg>
    <span class="lang">ENG</span>
    <span class="clock">14:43<br>30/05/2022</span>
    <svg class="note" width="21" height="21"><path d="M.8 1h19v15.500H13l-2.700 3-2.700-3H.8z" fill="none" stroke="#fff" stroke-width="1.300"/></svg>
    <i class="peek"></i>
  </div>
</div>
</div>
</body>
</html>
```
FILE: styles.css
```css
* { box-sizing: border-box; }
body { margin: 0; background: #181818; overflow: hidden; font-family: "Open Sans", "DejaVu Sans", sans-serif; }
.defs { position: absolute; }
svg { display: block; flex: none; }
i { font-style: normal; }
.desktop { width: 1920px; height: 1080px; background: #191919; display: flex; flex-direction: column; overflow: hidden; }
.window { margin: 0 9px 9px; height: 1021px; display: flex; flex-direction: column; background: #35363a; }

/* tab strip */
.tabstrip { height: 54px; background: #202124; display: flex; border-top: 2px solid #252724; color: #fff; }
.caption { display: flex; gap: 43px; width: 300px; padding: 11px 0 0 21px; }
.newtab { margin: 23px 20px 0 0; }
.tab { width: 259px; height: 42px; margin-top: 10px; padding: 0 14px 0 14px; display: flex; align-items: center; position: relative; font-size: 14.300px; }
.tab + .tab:not(.nosep)::before { content: ""; position: absolute; left: 0; top: 9px; width: 1px; height: 24px; background: #5b5c60; }
.tab.active { background: #35363a; border-radius: 10px 10px 0 0; }
.tab .x { width: 12px; height: 12px; }
.ttl { flex: 1; margin: 0 10px 0 8px; white-space: nowrap; letter-spacing: -.2px; line-height: 24px; }
.ttl.fade { letter-spacing: -.35px; -webkit-mask: linear-gradient(90deg, #000 82%, transparent); }
.ttl.fadel { -webkit-mask: linear-gradient(270deg, #000 82%, transparent); }
.fav { width: 20px; height: 20px; }
.fav.g { width: 18px; height: 18px; margin-right: 1px; }
.ar { font-family: "DejaVu Sans", sans-serif; font-size: 13.300px; letter-spacing: 0; }

/* toolbar */
.toolbar { height: 45px; display: flex; align-items: center; padding-left: 7px; }
.cell { width: 40px; display: flex; justify-content: center; align-items: center; flex: none; }
.avatar { width: 28px; height: 28px; border-radius: 50%; background: #7b1fa2; color: #fff; font-size: 15px; line-height: 28px; text-align: center; }
.omnibox { width: 1433px; height: 35px; margin: 0 7px 0 8px; border-radius: 18px; background: #202124; display: flex; align-items: center; color: #9aa0a6; }
.omnibox .cell:first-child { margin-left: 2px; }
.url { margin-left: auto; font-size: 16.500px; letter-spacing: -.1px; color: #8a8d91; }
.url b { font-weight: 400; color: #fff; }
.info { margin: 0 15px 0 14px; }

/* bookmarks */
.bookmarks { height: 41px; border-bottom: 1px solid #5a5b5f; display: flex; align-items: center; justify-content: flex-end; gap: 19.100px; padding: 0 17px 4px 23px; color: #fff; }
.more { margin-right: auto; font-size: 19px; line-height: 20px; }
.bm { display: flex; gap: 10.500px; align-items: center; font-size: 14.500px; letter-spacing: -.2px; }
.bm span { white-space: nowrap; line-height: 20px; display: flex; justify-content: center; gap: .2em; }
.bm i.ar { font-size: 12.500px; }
.bm span.ar.wide { font-size: 13.500px; }
.bm svg { width: 20px; height: 20px; }
.w46 { width: 46px; } .w48 { width: 48px; } .w53 { width: 53px; } .w58 { width: 58px; } .w61 { width: 61px; }
.w66 { width: 66px; } .w131 { width: 132px; } .w138 { width: 139px; } .w142 { width: 143px; }

/* page */
.viewport { flex: 1; display: flex; min-height: 0; background: #fff; }
.page { flex: 1; font-family: "DejaVu Sans", sans-serif; overflow: hidden; }
.site-head { height: 100px; padding: 0 131px; display: flex; justify-content: space-between;
  background:
    radial-gradient(ellipse 480px 140px at 860px 110px, rgba(248,198,172,.7), rgba(248,200,172,.5) 35%, transparent 100%),
    radial-gradient(ellipse 300px 200px at 460px 10px, rgba(208,220,174,.8) 20%, transparent 100%),
    linear-gradient(75deg, #fff0d9 0, #fff0d9 210px, #e9e8c8 320px, #d6dcb4 440px, #d8d9b6 560px, #f3e0c0 950px, #ffeed6 1250px, #fff0da 1600px, #fdecd0 1882px); }
.logo { margin-top: 18px; overflow: visible; }
.logo-text { font-family: "DejaVu Sans", sans-serif; font-weight: 700; }
.logo-sub { font: 700 7px "DejaVu Sans", sans-serif; fill: #6b6a66; }
.head-title { display: flex; height: 33px; margin-top: 38px; }
.head-title h1 { margin: -3px 18px 0 0; width: 129px; font-size: 25.500px; line-height: 32px; font-weight: 400; color: #fdb833; white-space: nowrap; direction: rtl; }
.head-title svg + svg { margin-left: 22px; }
.content { padding: 38px 131px 0; }
.progress { height: 50px; border-radius: 25px; background: #fee6bc; display: flex; justify-content: flex-end; }
.bar { height: 50px; border-radius: 25px; background: #fdb833; display: flex; align-items: center; justify-content: flex-end; padding: 5px 62px 0 0; }
.dot { width: 19px; height: 19px; border-radius: 50%; background: #fff; margin-right: 467px; }
.ok { width: 20px; height: 20px; }
.ok.second { margin-right: 514px; }
.steps { display: flex; justify-content: space-between; font-size: 14px; font-weight: 700; color: #000; line-height: 20px; margin-top: 18px; }
.steps span { white-space: nowrap; }
.steps .on { color: #fdb833; }
.s1 { width: 143px; font-size: 14.600px; } .s2 { width: 82px; } .s3 { width: 48px; } .s4 { width: 81px; }
.sub { margin: 134px 0 0; height: 40px; display: flex; justify-content: center; font-size: 28.500px; line-height: 40px; color: #6c6c6c; white-space: nowrap; }
h2 { margin: 11px 0 0; height: 50px; display: flex; justify-content: center; font-size: 37px; line-height: 50px; color: #212529; white-space: nowrap; }
h2 span { transform: scaleX(.885); }
.address { height: 71px; margin-top: 24px; border: 1px solid #e0e0e0; border-radius: 36px; padding: 21px 38px; font-size: 16px; line-height: 20px; color: #111; }

/* map */
.map { position: relative; height: 301px; margin-top: 24px; overflow: hidden; font-family: Roboto, sans-serif; }
.land { fill: #fff; }
.water { fill: #c8d7d3; }
.creek { fill: none; stroke: #c8d7d3; stroke-width: 6; }
.r { fill: none; stroke: #ececec; stroke-width: 5; stroke-linejoin: round; }
.m { fill: none; stroke: #e8e8e8; stroke-width: 8; stroke-linejoin: round; }
.big { fill: none; stroke: #ebebeb; stroke-width: 13; stroke-linejoin: round; }
.labels text { font: 17.500px Roboto, sans-serif; fill: #2b2b2b; stroke: #fff; stroke-width: 3px; paint-order: stroke; stroke-linejoin: round; }
.labels .city { font-size: 24px; font-weight: 700; }
.labels .road text { font-size: 13.500px; fill: #888; }
.shield text { font: 700 11px Roboto, sans-serif; fill: #fff; text-anchor: middle; }
.map button { border: 0; background: #fff; padding: 0; font: 22.500px Roboto, sans-serif; color: #565656; }
.map-type { position: absolute; left: 13px; top: 12px; height: 50px; display: flex; box-shadow: 0 1px 4px rgba(0,0,0,.3); background: #fff; border-radius: 2px; }
.map-type button { width: 123px; }
.map-type .sel { width: 87px; color: #000; font-weight: 500; border-right: 1px solid #e6e6e6; }
.full, .locate { position: absolute; display: flex; justify-content: center; }
.map .full { right: 12px; top: 12px; width: 50px; height: 50px; align-items: center; border-radius: 2px; box-shadow: 0 1px 4px rgba(0,0,0,.3); }
.map .locate { right: 25px; top: 265px; width: 62px; height: 62px; padding-top: 20px; border-radius: 4px; }
.scroll { width: 20px; background: #f1f1f1; display: flex; flex-direction: column; align-items: center; padding-top: 9px; }
.scroll i { width: 17px; height: 512px; background: #c1c1c1; margin-top: 7px; }
.down { margin: auto 0 8px; }

/* taskbar */
.taskbar { height: 50px; background: #1f1f1f; display: flex; color: #fff; align-items: stretch; }
.start { width: 60px; display: flex; align-items: center; justify-content: center; }
.search { width: 429px; background: #333; border: 1px solid #5e5e5e; display: flex; align-items: center; padding-left: 13px; gap: 14px; color: #cfcfcf; font-size: 17.500px; }
.app { width: 62px; display: flex; align-items: center; justify-content: center; }
.app.open { box-shadow: inset 0 -3px #76b9ed; width: 51px; margin: 0 5.500px; }
.app.open.current { width: 61px; margin: 0 .5px; background: #4c4c4c; }
.tray { margin-left: auto; display: flex; align-items: center; padding-right: 4px; }
.sun { width: 24px; height: 24px; border-radius: 50%; background: linear-gradient(135deg, #ffe27a, #ff9800); margin-right: 13px; }
.temp { width: 97px; font-size: 17px; white-space: nowrap; }
.chev { margin: 0 15px 0 21px; }
.bat { margin-left: 10px; }
.wifi { margin-left: 13px; }
.spk { margin-left: 10px; }
.lang { margin-left: 12px; width: 30px; font-size: 14.500px; letter-spacing: -.3px; }
.clock { margin-left: 16px; width: 76px; text-align: center; font-size: 14px; line-height: 23.500px; letter-spacing: -.3px; }
.note { margin-left: 23px; }
.peek { width: 1px; height: 50px; background: #5a5a5a; margin-left: 25px; }
```
